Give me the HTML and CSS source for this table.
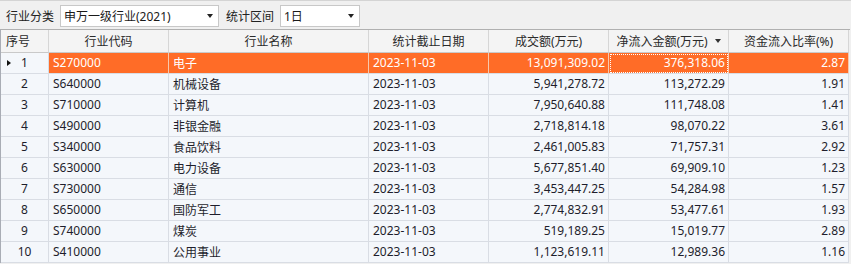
FILE: index.html
```html
<!DOCTYPE html>
<html lang="zh-CN">
<head>
<meta charset="utf-8">
<title>行业资金流向</title>
<link rel="stylesheet" href="styles.css">
</head>
<body>
<div class="toolbar">
  <span class="label">行业分类</span>
  <div class="combo combo-wide"><span>申万一级行业(2021)</span><i class="arrow"></i></div>
  <span class="label label-2">统计区间</span>
  <div class="combo combo-narrow"><span>1日</span><i class="arrow"></i></div>
</div>
<div class="grid">
  <div class="hd hd-left">序号</div>
  <div class="hd">行业代码</div>
  <div class="hd">行业名称</div>
  <div class="hd">统计截止日期</div>
  <div class="hd">成交额(万元)</div>
  <div class="hd hd-sort"><span class="hd-text">净流入金额(万元)</span><i class="sort"></i></div>
  <div class="hd">资金流入比率(%)</div>

  <div class="c num current"><i class="ptr"></i>1</div>
  <div class="c sel">S270000</div>
  <div class="c sel">电子</div>
  <div class="c sel">2023-11-03</div>
  <div class="c sel r">13,091,309.02</div>
  <div class="c sel r focus">376,318.06</div>
  <div class="c sel r">2.87</div>

  <div class="c num">2</div><div class="c">S640000</div><div class="c">机械设备</div><div class="c">2023-11-03</div><div class="c r">5,941,278.72</div><div class="c r">113,272.29</div><div class="c r">1.91</div>
  <div class="c num">3</div><div class="c">S710000</div><div class="c">计算机</div><div class="c">2023-11-03</div><div class="c r">7,950,640.88</div><div class="c r">111,748.08</div><div class="c r">1.41</div>
  <div class="c num">4</div><div class="c">S490000</div><div class="c">非银金融</div><div class="c">2023-11-03</div><div class="c r">2,718,814.18</div><div class="c r">98,070.22</div><div class="c r">3.61</div>
  <div class="c num">5</div><div class="c">S340000</div><div class="c">食品饮料</div><div class="c">2023-11-03</div><div class="c r">2,461,005.83</div><div class="c r">71,757.31</div><div class="c r">2.92</div>
  <div class="c num">6</div><div class="c">S630000</div><div class="c">电力设备</div><div class="c">2023-11-03</div><div class="c r">5,677,851.40</div><div class="c r">69,909.10</div><div class="c r">1.23</div>
  <div class="c num">7</div><div class="c">S730000</div><div class="c">通信</div><div class="c">2023-11-03</div><div class="c r">3,453,447.25</div><div class="c r">54,284.98</div><div class="c r">1.57</div>
  <div class="c num">8</div><div class="c">S650000</div><div class="c">国防军工</div><div class="c">2023-11-03</div><div class="c r">2,774,832.91</div><div class="c r">53,477.61</div><div class="c r">1.93</div>
  <div class="c num">9</div><div class="c">S740000</div><div class="c">煤炭</div><div class="c">2023-11-03</div><div class="c r">519,189.25</div><div class="c r">15,019.77</div><div class="c r">2.89</div>
  <div class="c num">10</div><div class="c">S410000</div><div class="c">公用事业</div><div class="c">2023-11-03</div><div class="c r">1,123,619.11</div><div class="c r">12,989.36</div><div class="c r">1.16</div>
</div>
</body>
</html>
```
FILE: styles.css
```css
* { box-sizing: border-box; }
html, body {
  margin: 0;
  padding: 0;
  background: #f0f0f0;
  font-family: "Noto Sans", "Noto Sans CJK SC", sans-serif;
  font-size: 12px;
  color: #1f1f2a;
  overflow: hidden;
}
.toolbar {
  height: 29px;
  border-top: 1px solid #d4d4d4;
  display: flex;
  align-items: center;
  padding-left: 6px;
  padding-top: 1px;
}
.label {
  width: 54px;
  color: #222;
}
.label-2 { margin-left: 7px; width: 54px; }
.combo {
  height: 22px;
  background: #fff;
  border: 1px solid #c8c8c8;
  display: flex;
  align-items: center;
  padding-left: 3px;
  padding-right: 5px;
  color: #1a1a1a;
}
.combo span { flex: 1; }
.combo-wide { width: 159px; }
.combo-narrow { width: 80px; }
.arrow {
  width: 0; height: 0;
  border-left: 3.5px solid transparent;
  border-right: 3.5px solid transparent;
  border-top: 4px solid #222;
}
.grid {
  display: grid;
  grid-template-columns: 48px 120px 200px 120px 120px 120px 120px;
  grid-template-rows: 23px repeat(10, 21px);
  border-top: 1px solid #b0b0b0;
  border-left: 1px solid #a9adb5;
  width: 850px;
  background: #f0f0f0;
}
.hd {
  background: #f4f4f4;
  border-right: 1px solid #d6d6d6;
  border-bottom: 1px solid #c9c9c9;
  display: flex;
  align-items: center;
  justify-content: center;
  color: #2a2a2a;
  padding-bottom: 1px;
}
.hd-left { justify-content: flex-start; padding-left: 5px; }
.hd-sort { padding-right: 8px; }
.hd-text { flex: 1; text-align: center; }
.sort {
  width: 0; height: 0;
  border-left: 3.5px solid transparent;
  border-right: 3.5px solid transparent;
  border-top: 4px solid #333;
  margin-right: -1px;
}
.c {
  background: #f4f7fb;
  border-right: 1px solid #d9dde4;
  border-bottom: 1px solid #d9dde4;
  display: flex;
  align-items: center;
  padding: 0 4px 1px 4px;
  white-space: nowrap;
  color: #1e1e2c;
}
.r { justify-content: flex-end; padding-right: 3px; }
.num { justify-content: center; position: relative; padding: 0 0 1px 0; }
.ptr {
  position: absolute;
  left: 6px;
  top: 7px;
  width: 0; height: 0;
  border-top: 3.5px solid transparent;
  border-bottom: 3.5px solid transparent;
  border-left: 4px solid #111;
}
.sel {
  background: #ff6c27;
  color: #fff;
  border-right-color: #f7c8ad;
  border-bottom-color: #d9dde4;
}
.focus {
  outline: 1px dotted #ffffff;
  outline-offset: -2px;
}
```
